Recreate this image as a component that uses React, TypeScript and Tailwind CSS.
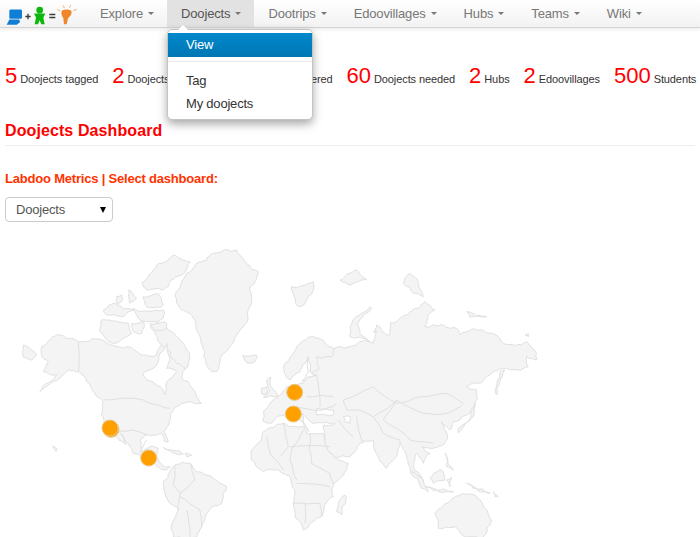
import React from 'react';

const navItems = ['Explore', 'Doojects', 'Dootrips', 'Edoovillages', 'Hubs', 'Teams', 'Wiki'];

const stats = [
  { value: '5', label: 'Doojects tagged' },
  { value: '2', label: 'Doojects stored' },
  { value: '12', label: 'Doojects delivered' },
  { value: '60', label: 'Doojects needed' },
  { value: '2', label: 'Hubs' },
  { value: '2', label: 'Edoovillages' },
  { value: '500', label: 'Students' },
];

// map shapes use 3x page coordinates, origin at the top left of the map
const land = [
  // north america
  'M125 320 L150 300 L170 285 L200 295 L235 305 L260 305 L295 297 L320 310 L345 318 L370 325 L385 320 L410 335 L430 345 L470 345 L480 320 L510 300 L530 330 L555 380 L545 415 L565 425 L585 455 L605 490 L570 485 L545 490 L530 500 L510 540 L490 575 L505 605 L495 605 L485 580 L440 585 L420 600 L425 635 L450 620 L475 625 L470 650 L490 680 L510 680 L495 690 L480 685 L440 665 L400 640 L375 600 L360 578 L378 615 L345 580 L310 565 L305 520 L310 485 L290 470 L275 445 L260 425 L235 395 L205 390 L180 415 L160 425 L120 455 L170 405 L130 395 L145 365 L125 345 Z',
  // south america
  'M490 725 L510 695 L525 675 L570 670 L590 695 L620 705 L680 740 L665 790 L620 820 L605 860 L590 891 L520 891 L535 810 L495 760 Z',
  // greenland
  'M525 165 L560 100 L590 70 L640 40 L710 30 L740 70 L775 95 L750 140 L750 200 L720 270 L690 320 L650 395 L635 395 L610 350 L600 290 L585 240 L545 210 L530 190 Z',
  // arctic islands
  'M425 130 L470 75 L520 45 L570 65 L545 105 L490 150 L440 150 Z',
  'M450 260 L490 250 L540 300 L570 355 L560 385 L530 370 L480 310 Z',
  'M330 240 L385 250 L395 280 L345 310 L300 275 L305 240 Z',
  'M400 205 L490 210 L490 235 L420 240 Z',
  'M310 210 L345 190 L400 210 L370 230 L320 225 Z',
  'M385 150 L410 175 L390 190 Z',
  'M395 250 L430 245 L425 280 L400 275 Z',
  'M350 170 L365 165 L365 185 L350 190 Z',
  'M430 170 L470 160 L490 195 L440 200 Z',
  'M450 250 L495 245 L500 265 L465 270 Z',
  // iceland, uk, caribbean, aleutians
  'M728 345 L770 345 L765 365 L740 368 Z',
  'M800 420 L812 412 L835 470 L790 472 L810 450 Z',
  'M785 445 L800 440 L800 462 L785 462 Z',
  'M70 315 L110 345 L95 360 L70 352 Z',
  'M490 622 L530 632 L550 642 L510 632 Z',
  'M555 640 L575 645 L560 650 Z',
  // africa
  'M755 630 L790 575 L850 550 L910 560 L920 580 L970 580 L990 640 L1015 660 L1045 670 L1000 730 L1000 770 L965 830 L910 870 L880 790 L870 710 L835 690 L790 695 L755 660 Z',
  // eurasia
  'M790 545 L790 515 L810 490 L840 465 L860 440 L910 430 L920 410 L950 405 L925 400 L930 350 L950 350 L995 350 L1000 325 L1015 320 L1050 320 L1110 305 L1050 290 L1050 260 L1110 200 L1115 205 L1070 250 L1080 280 L1120 310 L1130 255 L1170 285 L1170 250 L1190 245 L1230 215 L1275 185 L1305 210 L1275 260 L1330 255 L1370 265 L1380 285 L1420 265 L1470 280 L1500 295 L1510 310 L1580 305 L1610 340 L1610 360 L1580 350 L1585 380 L1520 385 L1480 395 L1400 440 L1430 450 L1425 495 L1380 540 L1360 545 L1350 570 L1325 545 L1340 575 L1340 600 L1300 625 L1265 620 L1290 640 L1270 670 L1250 640 L1240 680 L1272 722 L1230 690 L1220 650 L1200 605 L1160 685 L1130 640 L1120 600 L1080 610 L1050 650 L1005 655 L975 590 L970 555 L1005 550 L945 550 L920 535 L905 520 L925 575 L885 530 L860 525 L830 530 L815 550 Z',
  // scandinavia
  'M850 385 L890 320 L940 290 L1000 325 L995 350 L950 350 L955 390 L930 400 L925 350 L900 395 L870 420 Z',
  // asia and pacific islands
  'M1490 465 L1500 420 L1515 390 L1500 395 L1485 450 Z',
  'M1375 578 L1420 530 L1425 490 L1410 540 L1375 565 Z',
  'M1230 695 L1250 705 L1285 755 L1265 745 Z',
  'M1275 740 L1360 755 L1300 752 Z',
  'M1290 715 L1325 690 L1335 720 L1300 730 Z',
  'M1340 720 L1355 712 L1350 740 Z',
  'M1335 640 L1360 690 L1340 680 Z',
  'M1400 730 L1470 760 L1420 745 Z',
  // australia
  'M1305 820 L1340 790 L1380 765 L1425 765 L1450 800 L1475 840 L1450 891 L1400 891 L1365 860 L1315 865 Z',
  // madagascar, polar islands
  'M1010 815 L1035 765 L1040 775 L1025 825 Z',
  'M875 140 L940 125 L915 190 L895 200 Z',
  'M1020 120 L1070 90 L1100 120 L1050 135 Z',
  'M1210 130 L1230 100 L1270 170 L1240 160 Z',
  'M1400 215 L1460 230 L1410 232 Z',
  // specks
  'M158 618 L172 628 L168 634 Z',
  'M1575 285 L1585 280 L1585 290 Z',
  'M1120 275 L1128 270 L1128 280 Z',
  'M1480 755 L1495 770 L1485 770 Z',
];

const seas = [
  // hudson bay
  'M430 400 L470 375 L480 340 L500 310 L510 355 L500 385 L530 395 L500 425 L495 465 L480 440 L440 420 Z',
  // baltic, black sea, caspian
  'M925 350 L930 395 L945 405 L905 425 L925 395 Z',
  'M950 505 L1000 510 L1000 525 L950 525 Z',
  'M1030 530 L1050 530 L1048 550 L1035 545 Z',
];

const borders = [
  'M235 305 L235 395',
  'M310 480 L430 480 L470 495 L510 505',
  'M355 575 L400 570 L440 585',
  'M420 640 L440 600',
  'M525 675 L520 730 L540 760 L535 810',
  'M570 670 L585 720 L540 760',
  'M540 770 L600 810 L605 860',
  'M560 810 L570 891',
  'M800 590 L810 640 L850 690',
  'M850 550 L865 620 L840 650',
  'M910 570 L880 620 L870 660 L890 720',
  'M930 580 L935 670 L990 700 L1000 730',
  'M870 620 L990 620',
  'M880 790 L960 790 L965 830',
  'M890 730 L990 740',
  'M915 790 L915 850',
  'M880 500 L970 510 L1000 500 L1010 490',
  'M950 405 L960 500',
  'M920 470 L1000 470',
  'M1030 480 L1120 440 L1190 490 L1260 470 L1340 460 L1390 490 L1340 520 L1270 520 L1190 480',
  'M1030 480 L1040 510 L1080 510 L1120 530 L1190 480',
  'M1120 530 L1150 580 L1200 600',
  'M1070 530 L1090 610',
  'M1190 480 L1150 540 L1230 600 L1300 610',
  'M1015 540 L1060 590',
];

const markers = [
  [333, 568],
  [330, 564],
  [446, 654],
  [884, 457],
  [880, 522],
];

// breaks straight edges into a wobbly coastline, same result on every render
function roughen(d: string, rounds: number, amount: number) {
  let seed = d.length * 7 + 13;
  const noise = () => {
    seed = (seed * 16807) % 2147483647;
    return (seed % 2000) / 1000 - 1;
  };
  const closed = d.trim().endsWith('Z');
  let pts = (d.match(/-?\d+(\.\d+)?/g) || []).map(Number).reduce<number[][]>((acc, n, i, all) => {
    if (i % 2 === 0) acc.push([n, all[i + 1]]);
    return acc;
  }, []);
  if (closed) pts = [...pts, pts[0]];
  for (let r = 0; r < rounds; r++) {
    const next: number[][] = [pts[0]];
    for (let i = 1; i < pts.length; i++) {
      const [ax, ay] = pts[i - 1];
      const [bx, by] = pts[i];
      const len = Math.hypot(bx - ax, by - ay);
      if (len > 10) {
        const off = noise() * len * amount;
        next.push([(ax + bx) / 2 + (-(by - ay) / len) * off, (ay + by) / 2 + ((bx - ax) / len) * off]);
      }
      next.push(pts[i]);
    }
    pts = next;
  }
  return 'M' + pts.map(([x, y]) => `${x.toFixed(1)} ${y.toFixed(1)}`).join(' L') + (closed ? ' Z' : '');
}

function Logo() {
  return (
    <svg viewBox="0 0 240 80" className="h-[27px] w-20">
      <path d="M32 28 H62 Q66 28 66 32 V52 Q66 56 62 56 H32 Q28 56 28 52 V32 Q28 28 32 28 Z" fill="#0f7fd6" />
      <path d="M28 58 L58 58 L60 66 L50 74 L20 74 Z" fill="#0f7fd6" />
      <path d="M76 49 H92 M84 41 V57" stroke="#3c3c3c" strokeWidth="4" />
      <circle cx="119" cy="30" r="10" fill="#0cb80c" />
      <path d="M102 40 L136 40 L130 52 L134 72 L124 72 L119 60 L114 72 L104 72 L108 52 Z" fill="#0cb80c" />
      <path d="M148 43 H166 M148 52 H166" stroke="#3c3c3c" strokeWidth="4" />
      <path d="M185 32 Q200 24 214 32 Q218 44 204 54 L200 72 L192 72 L190 54 Q182 44 185 32 Z" fill="#f0862a" />
      <path d="M172 28 L180 32 M190 16 L193 24 M212 15 L208 23 M230 28 L220 31" stroke="#f2b27a" strokeWidth="3" />
    </svg>
  );
}

function WorldMap() {
  return (
    <svg viewBox="0 0 2100 891" className="block h-[297px] w-[700px]">
      <g fill="#f4f4f4" stroke="#e0e0e0" strokeWidth="3" strokeLinejoin="round">
        {land.map((d, i) => (
          <path key={i} d={roughen(d, 3, 0.14)} />
        ))}
      </g>
      <g fill="#ffffff" stroke="#e0e0e0" strokeWidth="3" strokeLinejoin="round">
        {seas.map((d, i) => (
          <path key={i} d={roughen(d, 2, 0.12)} />
        ))}
      </g>
      <g fill="none" stroke="#e0e0e0" strokeWidth="3" strokeLinejoin="round">
        {borders.map((d, i) => (
          <path key={i} d={roughen(d, 2, 0.06)} />
        ))}
      </g>
      {markers.map(([x, y], i) => (
        <circle key={i} cx={x} cy={y} r="24" fill="#ffa000" stroke="#e6c98c" strokeWidth="3" />
      ))}
    </svg>
  );
}

export default function App() {
  return (
    <div className="relative h-[537px] w-[700px] overflow-hidden bg-white font-['Liberation_Sans',Arial,sans-serif] text-[13px] text-[#333333]">
      <nav className="flex h-[28px] items-stretch border-b border-[#d4d4d4] bg-gradient-to-b from-white to-[#f2f2f2] shadow-[0_1px_4px_rgba(0,0,0,0.1)]">
        <div className="flex w-[86px] items-center">
          <Logo />
        </div>
        {navItems.map((item) => {
          const active = item === 'Doojects';
          return (
            <div
              key={item}
              className={`relative flex items-center gap-[5px] pl-[14px] pr-[13px] tracking-[-0.15px] ${active ? 'bg-[#e2e2e2] text-[#555555]' : 'text-[#777777]'}`}
            >
              {item}
              <span className="h-0 w-0 border-x-[3px] border-t-[3px] border-x-transparent border-t-[#777777]" />
            </div>
          );
        })}
      </nav>

      <div className="absolute left-[167px] top-[29px] z-10 h-[91px] w-[146px] rounded-[5px] border border-[#c4c4c4] bg-white pt-[3px] tracking-[-0.2px] shadow-[0_4px_10px_rgba(0,0,0,0.35)]">
        <span className="absolute left-[10px] top-[-5px] h-0 w-0 border-x-[5px] border-b-[5px] border-x-transparent border-b-white" />
        <div className="flex h-[24px] items-center bg-gradient-to-b from-[#0088cc] to-[#0077b3] pl-[18px] text-white">View</div>
        <div className="mb-[7px] mt-[4px] h-px bg-[#e8e8e8]" />
        <div className="flex h-[23px] items-center pl-[18px]">Tag</div>
        <div className="flex h-[23px] items-center pl-[18px]">My doojects</div>
      </div>

      <div className="mt-[33px] flex items-baseline gap-[14px] whitespace-nowrap pl-[5px] text-[11px] tracking-[-0.1px]">
        {stats.map((stat) => (
          <span key={stat.label + stat.value}>
            <span className="text-[22px] leading-[30px] tracking-normal text-[#ff0000]">{stat.value}</span> {stat.label}
          </span>
        ))}
      </div>

      <div className="mx-[5px] mt-[30px] border-b border-[#eeeeee] pb-[4px]">
        <h1 className="text-[16px] font-bold leading-[20px] tracking-[0.1px] text-[#ff0000]">Doojects Dashboard</h1>
      </div>

      <p className="ml-[5px] mt-[24px] font-bold leading-[18px] tracking-[-0.2px] text-[#ff3300]">Labdoo Metrics | Select dashboard:</p>

      <div className="relative ml-[5px] mt-[9px] h-[25px] w-[108px]">
        <select className="block h-full w-full appearance-none rounded-[4px] border border-[#cccccc] bg-white pl-[10px] tracking-[-0.2px] text-[#555555]">
          <option>Doojects</option>
        </select>
        <span className="pointer-events-none absolute left-[95px] top-[10px] h-0 w-0 border-x-[3px] border-t-[6px] border-x-transparent border-t-black" />
      </div>

      <div className="mt-[18px]">
        <WorldMap />
      </div>
    </div>
  );
}
